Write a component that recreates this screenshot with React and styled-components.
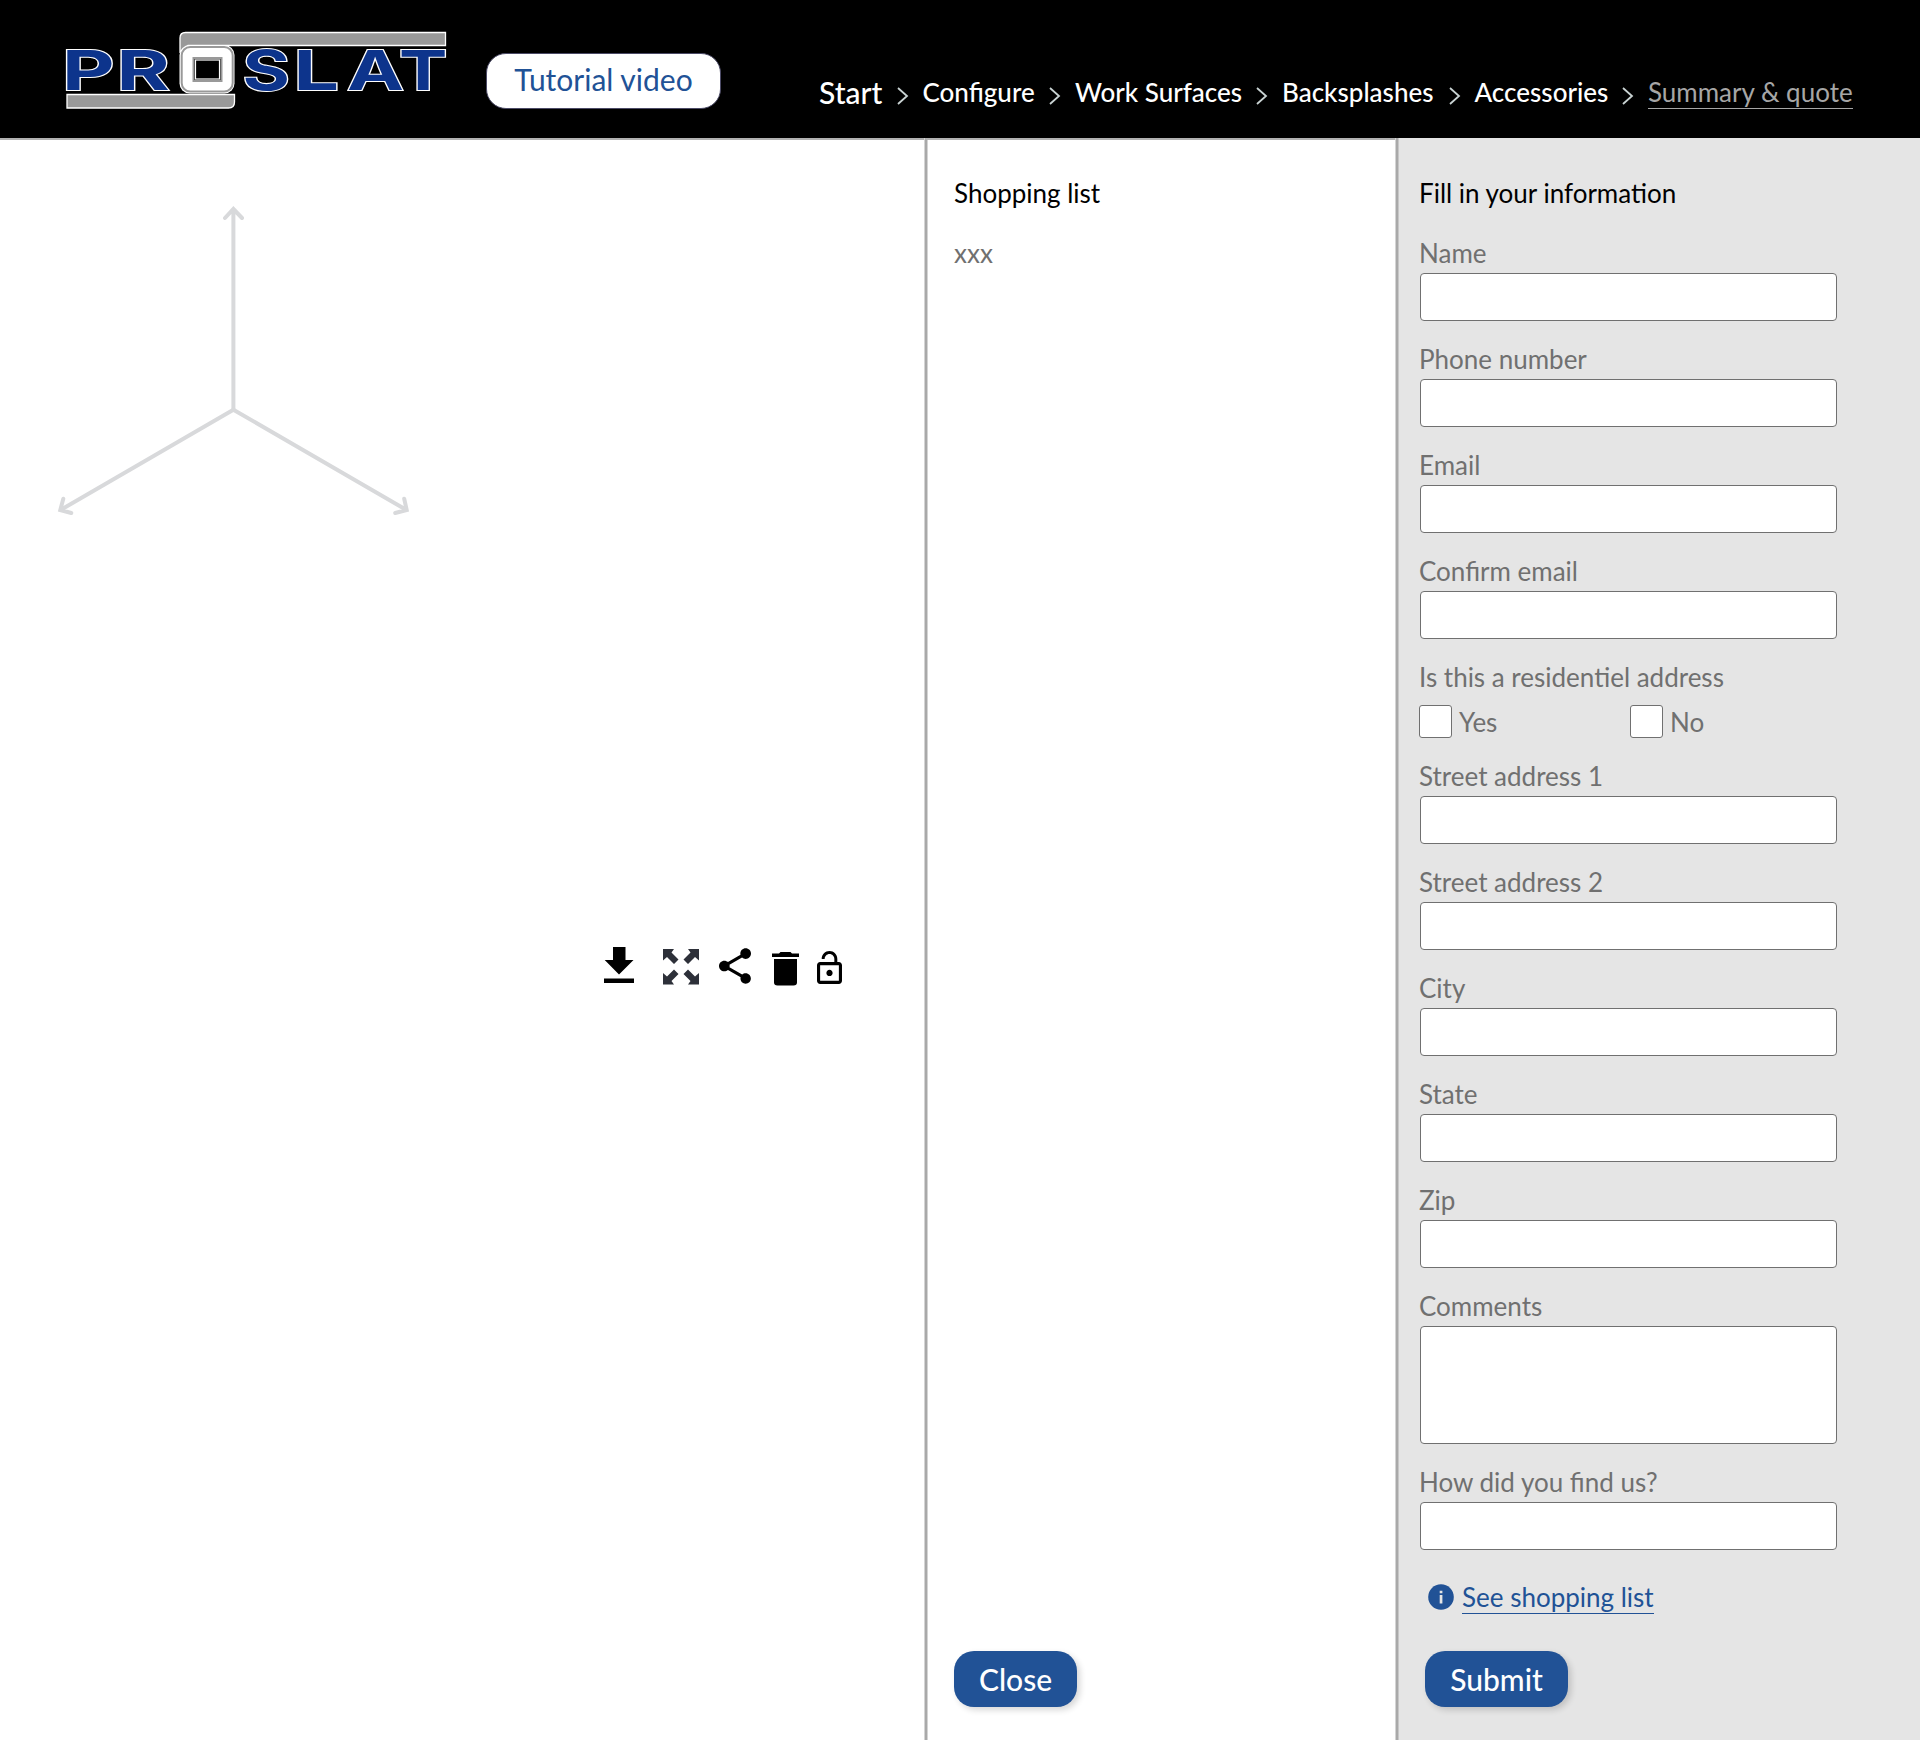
import React from 'react';
import styled, { createGlobalStyle } from 'styled-components';

const GlobalStyle = createGlobalStyle`
  *, *::before, *::after { box-sizing: border-box; }
  body { margin: 0; background: #fff; font-family: Lato, 'Liberation Sans', sans-serif; font-size: 26px; }
`;

const Page = styled.div`
  width: 1920px;
  height: 1740px;
  display: flex;
  flex-direction: column;
  overflow: hidden;
`;

const Header = styled.header`
  height: 138px;
  flex: none;
  background: #000;
  display: flex;
  align-items: flex-start;
`;

const Logo = styled.svg`
  width: 404px;
  height: 100px;
  margin: 20px 0 0 55px;
  flex: none;
`;

const LogoLetter = styled.text`
  font-family: Inter, 'Liberation Sans', sans-serif;
  font-weight: 700;
  font-size: 54.5px;
  fill: #0d348c;
  stroke: #fff;
  stroke-width: 2.4px;
  paint-order: stroke;
  vector-effect: non-scaling-stroke;
`;

const TutorialButton = styled.button`
  width: 235px;
  height: 56px;
  margin: 53px 0 0 27px;
  padding: 0 0 4px;
  border: 1px solid #4b4a66;
  border-radius: 20px;
  background: #fff;
  color: #215296;
  font: 400 30px/36px Lato, sans-serif;
`;

const Steps = styled.nav`
  margin: 72px 0 0 98px;
  display: flex;
  align-items: flex-start;
`;

const Step = styled.a`
  height: 37px;
  width: ${(p) => p.$w}px;
  white-space: nowrap;
  color: ${(p) => (p.$current ? '#a6a6a6' : '#fff')};
  font-size: ${(p) => (p.$big ? 30 : 26)}px;
  font-weight: ${(p) => (p.$current ? 400 : 500)};
  line-height: 40px;
  border-bottom: ${(p) => (p.$current ? '1px solid #a6a6a6' : '0')};
`;

const Chevron = styled.svg`
  width: 12px;
  height: 18px;
  margin: 15px 14px 0;
  flex: none;
  fill: none;
  stroke: #c9d3d3;
  stroke-width: 1.8;
`;

const Columns = styled.main`
  flex: 1;
  display: flex;
`;

const Viewer = styled.section`
  width: 925px;
  flex: none;
  border-top: 2px solid #b1b1b1;
  display: flex;
  flex-direction: column;
`;

const Axes = styled.svg`
  width: 360px;
  height: 320px;
  margin: 60px 0 0 54px;
  fill: none;
  stroke: #d8d9db;
  stroke-width: 4;
  stroke-linecap: round;
`;

const Toolbar = styled.div`
  margin: 427px 83px 0 0;
  height: 38px;
  display: flex;
  justify-content: flex-end;
  align-items: flex-start;
`;

const ToolIcon = styled.svg`
  width: ${(p) => p.$w}px;
  height: ${(p) => p.$h}px;
  margin: ${(p) => p.$top}px 0 0 ${(p) => p.$gap}px;
  fill: ${(p) => p.$color || '#000'};
`;

const ListPanel = styled.section`
  width: 471px;
  flex: none;
  padding: 37px 0 33px 27px;
  border-top: 2px solid #b1b1b1;
  border-left: 2px solid #a9a9a9;
  box-shadow: -1px 0 #d4d4d4, inset 1px 0 #d4d4d4;
  display: flex;
  flex-direction: column;
  align-items: flex-start;
`;

const FormPanel = styled.form`
  flex: 1;
  background: #e5e5e5;
  border-left: 2px solid #a9a9a9;
  box-shadow: -1px 0 #d4d4d4, inset 1px 0 #c7c7c7;
  padding: 39px 0 0 21px;
`;

const PanelTitle = styled.h2`
  margin: 0 0 28px;
  height: 32px;
  font-size: 26px;
  line-height: 32px;
  font-weight: 400;
  color: #000;
`;

const ListText = styled.p`
  margin: 0;
  line-height: 32px;
  color: #707070;
`;

const Field = styled.div`
  display: flex;
  flex-direction: column;
  margin-bottom: 22px;
`;

const Label = styled.label`
  height: 32px;
  line-height: 32px;
  color: #707070;
`;

const Input = styled.input`
  width: 417px;
  height: 48px;
  margin: 4px 0 0 1px;
  border: 1px solid #707070;
  border-radius: 4px;
  background: #fff;
`;

const TextArea = styled.textarea`
  width: 417px;
  height: 118px;
  margin: 4px 0 0 1px;
  border: 1px solid #707070;
  border-radius: 4px;
  background: #fff;
  resize: none;
`;

const Choices = styled.div`
  display: flex;
  margin-top: 12px;
`;

const Choice = styled.label`
  width: 211px;
  height: 33px;
  display: flex;
  gap: 7px;
  line-height: 34px;
  color: #707070;
`;

const CheckBox = styled.input`
  appearance: none;
  width: 33px;
  height: 33px;
  margin: 0;
  border: 1px solid #707070;
  border-radius: 3px;
  background: #fff;
`;

const InfoRow = styled.div`
  display: flex;
  align-items: flex-start;
  margin: 31px 0 37px 9px;
`;

const InfoIcon = styled.svg`
  width: 26px;
  height: 26px;
  margin: 3px 8px 0 0;
`;

const InfoLink = styled.a`
  height: 33px;
  line-height: 32px;
  color: #215296;
  border-bottom: 1px solid #215296;
`;

const PrimaryButton = styled.button`
  width: ${(p) => p.$w}px;
  height: 56px;
  margin: ${(p) => p.$m || '0'};
  padding: 0 0 1px;
  border: 0;
  border-radius: 20px;
  background: #215296;
  color: #fff;
  font: 500 30px/36px Lato, sans-serif;
  box-shadow: 3px 3px 6px rgba(0, 0, 0, 0.16);
`;

const LETTERS = [
  { ch: 'P', x: 62, sx: 1.49 },
  { ch: 'R', x: 116.5, sx: 1.49 },
  { ch: 'S', x: 242.5, sx: 1.33 },
  { ch: 'L', x: 293.5, sx: 1.48 },
  { ch: 'A', x: 347, sx: 1.4 },
  { ch: 'T', x: 399, sx: 1.33 },
];

const STEPS = [
  { text: 'Start', w: 63.5, big: true },
  { text: 'Configure', w: 112.5 },
  { text: 'Work Surfaces', w: 167 },
  { text: 'Backsplashes', w: 152.5 },
  { text: 'Accessories', w: 133.5 },
  { text: 'Summary & quote', w: 205, current: true },
];

function ProslatLogo() {
  return (
    <Logo viewBox="55 20 404 100">
      <path d="M180 52V38q0-5.500 5.500-5.500H445.500V45.500H188z" fill="#999" stroke="#fff" strokeWidth="1.300" />
      <path d="M67 94.500H234.500V102q0 6-6 6H67z" fill="#999" stroke="#fff" strokeWidth="1.300" />
      {LETTERS.map((l) => (
        <LogoLetter key={l.ch} transform={`translate(${l.x} 89.700) scale(${l.sx} 1)`}>{l.ch}</LogoLetter>
      ))}
      <rect x="179.500" y="45" width="55" height="48.500" rx="10" fill="#fff" />
      <rect x="181.700" y="47" width="51" height="44.500" rx="8.500" fill="#fff" stroke="#999" strokeWidth="2" />
      <rect x="193.500" y="58" width="28" height="23" fill="#000" stroke="#999" strokeWidth="2" />
      <rect x="195.500" y="60" width="24" height="19" fill="#000" stroke="#fff" strokeWidth="1.200" />
    </Logo>
  );
}

function TextField({ label }) {
  return (
    <Field>
      <Label>{label}</Label>
      <Input type="text" />
    </Field>
  );
}

export default function App() {
  return (
    <Page>
      <GlobalStyle />
      <Header>
        <ProslatLogo />
        <TutorialButton>Tutorial video</TutorialButton>
        <Steps>
          {STEPS.map((s, i) => (
            <React.Fragment key={s.text}>
              {i > 0 && (
                <Chevron viewBox="0 0 12 18"><path d="M1 1l9 8-9 8" /></Chevron>
              )}
              <Step $w={s.w} $big={s.big} $current={s.current}>{s.text}</Step>
            </React.Fragment>
          ))}
        </Steps>
      </Header>
      <Columns>
        <Viewer>
          <Axes viewBox="54 200 360 320">
            <path d="M233.400 409.700V209M225 218l8.400-9 8.600 9" />
            <path d="M233.400 409.700L60.500 510M63.300 498.700L60.300 510l11 3" />
            <path d="M233.400 409.700L406.500 510M404.200 498.700L406.700 510l-11.500 3" />
          </Axes>
          <Toolbar>
            <ToolIcon viewBox="0 0 30 36" $w={30} $h={36} $top={0} $gap={0}>
              <path d="M9 0h12.500v13H29.500L15 27.500.700 13H9zM0 31.500h30V36H0z" />
            </ToolIcon>
            <ToolIcon viewBox="0 0 36 36" $w={36} $h={36} $top={2} $gap={28.5} $color="#2d3039">
              <path d="M0 0h11L8.500 3.500l7 7-4.500 4.500-7-7L0 11.500z" />
              <path d="M36 0H25l2.500 3.500-7 7 4.500 4.500 7-7 4 3.500z" />
              <path d="M0 35.500h11L8.500 32l7-7-4.500-4.500-7 7L0 24z" />
              <path d="M36 35.500H25l2.500-3.500-7-7 4.500-4.500 7 7 4-3.500z" />
            </ToolIcon>
            <ToolIcon viewBox="3 2 18 20" $w={32} $h={36} $top={1} $gap={20.5}>
              <path d="M18 16.080c-.760 0-1.440.300-1.960.770L8.910 12.700c.050-.230.090-.460.090-.700s-.040-.470-.090-.700l7.050-4.110c.540.500 1.250.810 2.040.810 1.660 0 3-1.340 3-3s-1.340-3-3-3-3 1.340-3 3c0 .240.040.470.090.700L8.040 9.810C7.500 9.310 6.790 9 6 9c-1.660 0-3 1.340-3 3s1.340 3 3 3c.790 0 1.500-.310 2.040-.810l7.120 4.160c-.050.210-.080.430-.080.650 0 1.610 1.310 2.920 2.920 2.920 1.610 0 2.920-1.310 2.920-2.920s-1.310-2.920-2.920-2.920z" />
            </ToolIcon>
            <ToolIcon viewBox="0 0 27 34" $w={27} $h={34} $top={5} $gap={20.5}>
              <path d="M0 1.500h7L8.500 0h10L20 1.500h7V5H0zM2 7h23v23.500q0 3-3.500 3h-16Q2 33.500 2 30.500z" />
            </ToolIcon>
            <ToolIcon viewBox="4 1 16 21" $w={25} $h={33} $top={4} $gap={18.5}>
              <path d="M12 17c1.100 0 2-.900 2-2s-.900-2-2-2-2 .900-2 2 .900 2 2 2zm6-9h-1V6c0-2.760-2.240-5-5-5S7 3.240 7 6h1.900c0-1.710 1.390-3.100 3.100-3.100 1.710 0 3.100 1.390 3.100 3.100v2H6c-1.100 0-2 .900-2 2v10c0 1.100.900 2 2 2h12c1.100 0 2-.900 2-2V10c0-1.100-.900-2-2-2zm0 12H6V10h12v10z" />
            </ToolIcon>
          </Toolbar>
        </Viewer>
        <ListPanel>
          <PanelTitle>Shopping list</PanelTitle>
          <ListText>xxx</ListText>
          <PrimaryButton type="button" $w={123} $m="auto 0 0">Close</PrimaryButton>
        </ListPanel>
        <FormPanel>
          <PanelTitle>Fill in your information</PanelTitle>
          {['Name', 'Phone number', 'Email', 'Confirm email'].map((l) => (
            <TextField key={l} label={l} />
          ))}
          <Field>
            <Label>Is this a residentiel address</Label>
            <Choices>
              <Choice><CheckBox type="checkbox" />Yes</Choice>
              <Choice><CheckBox type="checkbox" />No</Choice>
            </Choices>
          </Field>
          {['Street address 1', 'Street address 2', 'City', 'State', 'Zip'].map((l) => (
            <TextField key={l} label={l} />
          ))}
          <Field>
            <Label>Comments</Label>
            <TextArea />
          </Field>
          <TextField label="How did you find us?" />
          <InfoRow>
            <InfoIcon viewBox="0 0 26 26">
              <circle cx="13" cy="13" r="12.800" fill="#215296" />
              <path d="M11.700 6.800h2.700v2.500h-2.700zM11.700 11h2.700v8.500h-2.700z" fill="#e5e5e5" />
            </InfoIcon>
            <InfoLink>See shopping list</InfoLink>
          </InfoRow>
          <PrimaryButton type="button" $w={143} $m="0 0 0 6px">Submit</PrimaryButton>
        </FormPanel>
      </Columns>
    </Page>
  );
}
